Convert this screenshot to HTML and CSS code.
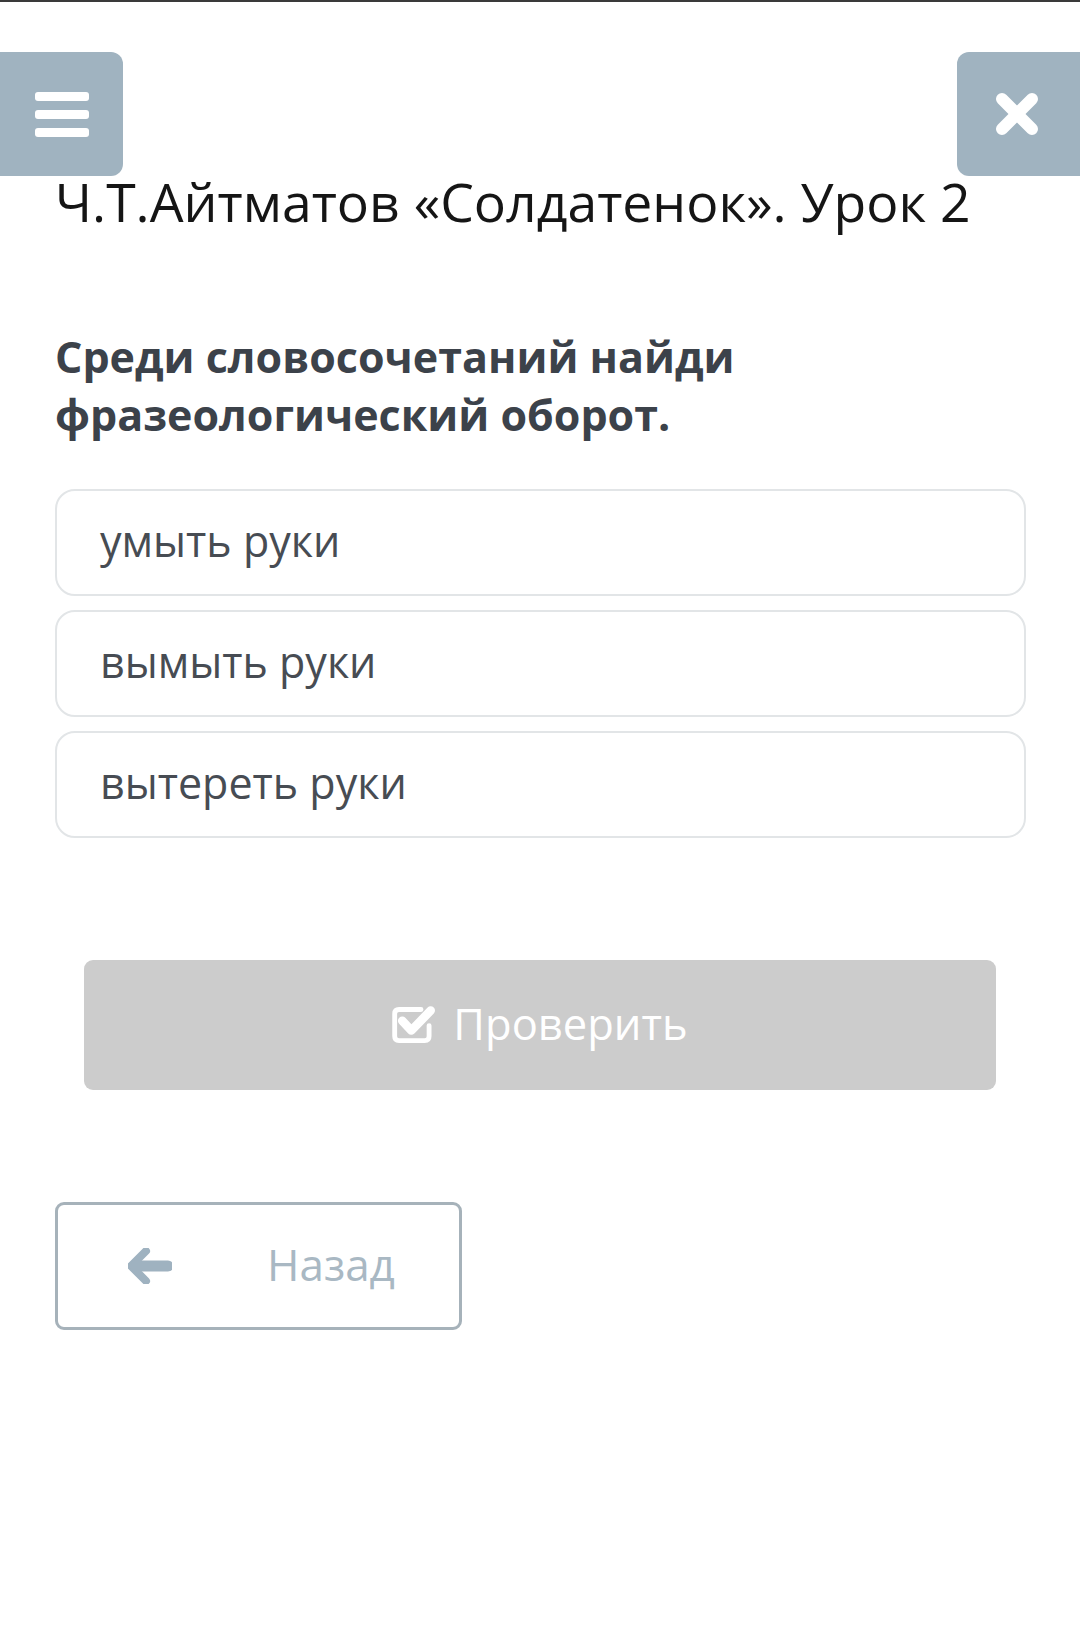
FILE: index.html
```html
<!DOCTYPE html>
<html lang="ru">
<head>
<meta charset="utf-8">
<title>Ч.Т.Айтматов «Солдатенок». Урок 2</title>
<link rel="stylesheet" href="styles.css">
</head>
<body>
<div class="topline"></div>
<button class="corner-btn menu-btn" aria-label="Меню">
  <span class="bar"></span><span class="bar"></span><span class="bar"></span>
</button>
<button class="corner-btn close-btn" aria-label="Закрыть">
  <svg width="44" height="44" viewBox="0 0 44 44"><g stroke="#fff" stroke-width="12" stroke-linecap="round"><line x1="7" y1="7" x2="37" y2="37"/><line x1="37" y1="7" x2="7" y2="37"/></g></svg>
</button>
<main class="page">
  <h1 class="title">Ч.Т.Айтматов «Солдатенок». Урок 2</h1>
  <h2 class="question">Среди словосочетаний найди фразеологический оборот.</h2>
  <div class="options">
    <div class="option">умыть руки</div>
    <div class="option">вымыть руки</div>
    <div class="option">вытереть руки</div>
  </div>
  <div class="check-wrap">
    <button class="check-btn">
      <svg class="check-icon" width="43" height="40" viewBox="0 0 40 37">
        <path d="M27 5 H6.5 Q2.5 5 2.5 9 V30 Q2.5 34 6.5 34 H30.5 Q34.5 34 34.5 30 V20" fill="none" stroke="#fff" stroke-width="4.5" stroke-linecap="round"/>
        <path d="M9.5 15.5 L18 24.5 L36 6" fill="none" stroke="#fff" stroke-width="8" stroke-linecap="round" stroke-linejoin="round"/>
      </svg>
      <span>Проверить</span>
    </button>
  </div>
  <button class="back-btn">
    <svg class="back-icon" width="44" height="36" viewBox="0 0 44 36">
      <path d="M18 3 L3 18 L18 33" fill="none" stroke="#9fb2c0" stroke-width="8" stroke-linecap="round" stroke-linejoin="round"/>
      <line x1="7" y1="18" x2="40" y2="18" stroke="#9fb2c0" stroke-width="11" stroke-linecap="round"/>
    </svg>
    <span>Назад</span>
  </button>
</main>
</body>
</html>
```
FILE: styles.css
```css
* { box-sizing: border-box; }
html, body { margin: 0; padding: 0; background: #fff; }
body {
  font-family: "Open Sans", "Noto Sans", sans-serif;
  width: 1080px;
  min-height: 1640px;
  position: relative;
  overflow: hidden;
}
.topline { height: 2px; background: #3a3a3a; }

.corner-btn {
  position: absolute;
  top: 52px;
  width: 123px;
  height: 124px;
  background: #a0b3c0;
  border: none;
  padding: 0;
  display: flex;
  align-items: center;
  justify-content: center;
}
.menu-btn { left: 0; border-radius: 0 12px 12px 0; flex-direction: column; gap: 9px; }
.menu-btn .bar { display: block; width: 54px; height: 9px; border-radius: 3px; background: #fff; }
.close-btn { left: 957px; width: 123px; border-radius: 12px 0 0 12px; justify-content: flex-start; padding-left: 38px; }

.page { padding: 168px 55px 0 55px; }

.title {
  margin: 0;
  font-weight: 400;
  font-size: 53.5px;
  line-height: 64px;
  color: #151515;
}
.question {
  margin: 94px 0 0 0;
  font-weight: 700;
  font-size: 43px;
  line-height: 58px;
  color: #3c424a;
  width: 780px;
}
.options {
  margin-top: 45px;
  display: flex;
  flex-direction: column;
  gap: 14px;
  width: 971px;
}
.option {
  height: 107px;
  border: 2px solid #e2e5e7;
  border-radius: 20px;
  padding-left: 43px;
  display: flex;
  align-items: center;
  font-size: 43px;
  color: #474c53;
  padding-bottom: 4px;
}
.check-wrap { padding: 122px 30px 0 29px; width: 971px; }
.check-btn {
  width: 100%;
  height: 130px;
  background: #cccccc;
  border: none;
  border-radius: 9px;
  display: flex;
  align-items: center;
  justify-content: center;
  gap: 18px;
  color: #fff;
  font-family: inherit;
  font-size: 43.5px;
  padding: 0 0 4px 0;
}
.check-icon { margin-top: 2px; }
.back-btn {
  margin-top: 112px;
  width: 407px;
  height: 128px;
  border: 3px solid #a6b2ba;
  border-radius: 9px;
  background: #fff;
  display: flex;
  align-items: center;
  padding: 0 0 4px 70px;
  gap: 95px;
  font-family: inherit;
  font-size: 44px;
  color: #a9b8c3;
}
.back-icon { margin-top: 4px; }
```
